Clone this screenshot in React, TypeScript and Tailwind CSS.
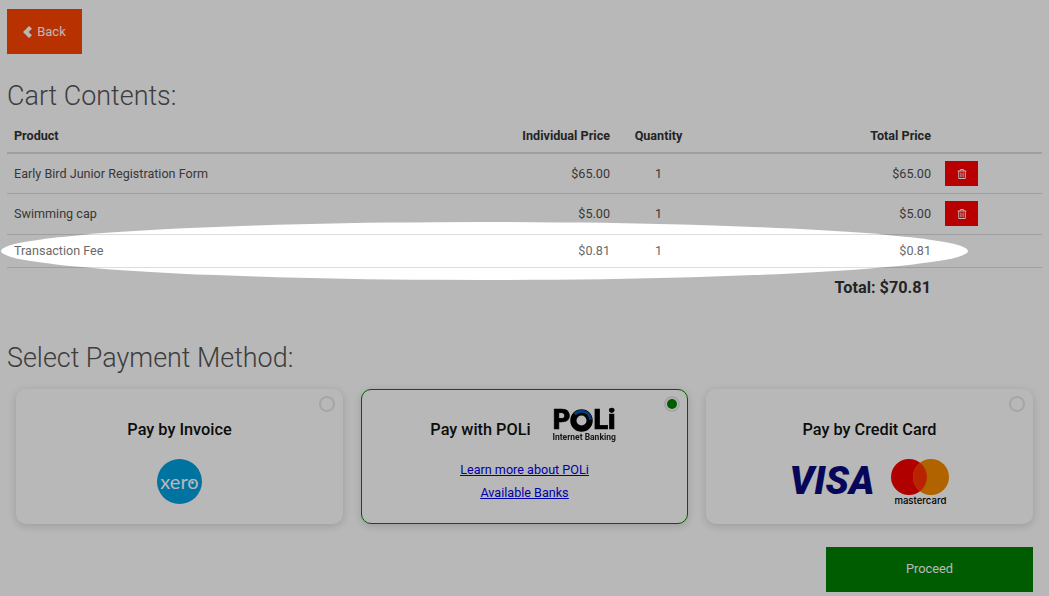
import { FaRegTrashAlt } from "react-icons/fa";

const rows = [
  { name: "Early Bird Junior Registration Form", price: "$65.00", qty: 1, total: "$65.00", removable: true },
  { name: "Swimming cap", price: "$5.00", qty: 1, total: "$5.00", removable: true },
  { name: "Transaction Fee", price: "$0.81", qty: 1, total: "$0.81", removable: false },
];

function Radio({ checked }: { checked?: boolean }) {
  return (
    <span
      className={`absolute flex h-[16px] w-[16px] items-center justify-center rounded-full border-2 border-[#e6e6e6] bg-white ${
        checked ? "right-[7px] top-[6px]" : "right-[8px] top-[7px]"
      }`}
    >
      {checked ? <span className="h-[10px] w-[10px] rounded-full bg-[#008000]" /> : null}
    </span>
  );
}

function XeroLogo() {
  return (
    <div className="flex h-[45px] w-[45px] items-center justify-center rounded-full bg-[#00a0e0] pb-[2px] font-['Lato',sans-serif] text-[20px] text-white">
      <span>
        xer
        <span className="relative">
          o
          <span className="absolute left-[4px] top-[12px] h-[3px] w-[3px] rounded-full bg-white" />
        </span>
      </span>
    </div>
  );
}

function PoliLogo() {
  return (
    <div className="flex h-[32px] w-[65px] flex-col items-center blur-[0.3px]">
      <div className="flex h-[23px] items-center text-[27px] font-black leading-[23px] text-black [-webkit-text-stroke:0.7px_#000]">
        <span>P</span>
        <svg viewBox="0 0 24 24" className="h-[23px] w-[23px]">
          <circle cx="12" cy="12" r="8.5" fill="none" stroke="#000" strokeWidth="6.5" />
          <path d="M5 5.5 A 9.5 9.5 0 0 1 21.5 11" fill="none" stroke="#0a56a8" strokeWidth="3" />
        </svg>
        <span>Li</span>
      </div>
      <div className="mt-[1px] whitespace-nowrap text-[8.5px] font-bold leading-[9px] text-[#222]">Internet Banking</div>
    </div>
  );
}

function CardLogos() {
  return (
    <div className="mt-[19px] flex items-start justify-center gap-[17px]">
      <div className="mt-[3px] text-[38.5px] font-black italic leading-[38px] text-[#0a0a7d]">VISA</div>
      <div className="flex flex-col items-center">
        <svg viewBox="0 0 58 36" className="h-[36px] w-[58px]">
          <circle cx="18" cy="18" r="18" fill="#f50000" />
          <circle cx="40" cy="18" r="18" fill="#f58a00" />
          <path d="M29 3.8 A18 18 0 0 1 29 32.2 A18 18 0 0 1 29 3.8 Z" fill="#ff3300" />
        </svg>
        <div className="pt-[1px] font-['Inter',sans-serif] text-[9.6px] font-medium leading-[10px] text-black">mastercard</div>
      </div>
    </div>
  );
}

export default function App() {
  return (
    <div className="relative h-screen overflow-hidden bg-white px-[7px] pt-[9px] font-['Roboto',sans-serif] text-[12.6px] text-[#4f4f4f]">
      <button
        type="button"
        className="flex h-[45px] w-[75px] items-center justify-center gap-[5px] bg-[#ff4500] text-[13px] text-white"
      >
        <svg viewBox="0 0 9 12" className="h-[12px] w-[9px]" fill="currentColor">
          <path d="M6 0 L9 2.8 L5.6 6 L9 9.2 L6 12 L0 6 Z" />
        </svg>
        Back
      </button>

      <h2 className="mt-[24px] text-[26.9px] font-light leading-[36px] text-[#555]">Cart Contents:</h2>

      <table className="mt-[5px] w-[1035px] table-fixed border-collapse">
        <colgroup>
          <col className="w-[443px]" />
          <col className="w-[167px]" />
          <col className="w-[83px]" />
          <col className="w-[238px]" />
          <col className="w-[104px]" />
        </colgroup>
        <thead>
          <tr className="h-[34px] border-b-2 border-[#ddd] font-bold text-[#333]">
            <th className="px-[7px] pt-[2px] text-left">Product</th>
            <th className="px-[7px] pt-[2px] text-right">Individual Price</th>
            <th className="px-[7px] pt-[2px] text-center">Quantity</th>
            <th className="px-[7px] pt-[2px] text-right">Total Price</th>
            <th />
          </tr>
        </thead>
        <tbody>
          {rows.map((row) => (
            <tr
              key={row.name}
              className={`border-b border-[#ddd] ${row.removable ? "h-[40.5px]" : "h-[33px] text-[#6a6a6a]"}`}
            >
              <td className="px-[7px] pt-[2px]">{row.name}</td>
              <td className="px-[7px] pt-[2px] text-right">{row.price}</td>
              <td className="px-[7px] pt-[2px] text-center">{row.qty}</td>
              <td className="px-[7px] pt-[2px] text-right">{row.total}</td>
              <td className="px-[7px]">
                {row.removable ? (
                  <button type="button" className="flex h-[25px] w-[33px] items-center justify-center bg-[#ff0000] text-white">
                    <FaRegTrashAlt className="text-[10px]" />
                  </button>
                ) : null}
              </td>
            </tr>
          ))}
          <tr className="h-[41px]">
            <td colSpan={4} className="px-[7px] text-right text-[16.3px] font-bold text-[#333]">
              Total: $70.81
            </td>
            <td />
          </tr>
        </tbody>
      </table>

      <h2 className="mt-[32px] text-[26.9px] font-light leading-[36px] text-[#555]">Select Payment Method:</h2>

      <div className="mt-[13px] grid grid-cols-3 gap-[18px] px-[9px]">
        <div className="relative h-[135px] rounded-[10px] bg-white pt-[31px] text-center shadow-[0_2px_8px_rgba(0,0,0,0.16)]">
          <Radio />
          <div className="text-[16.3px] font-medium leading-[20px] text-[#111]">Pay by Invoice</div>
          <div className="mt-[19px] flex justify-center">
            <XeroLogo />
          </div>
        </div>

        <div className="relative h-[135px] rounded-[10px] border border-[#008000] bg-white pt-[19px] text-center shadow-[0_2px_8px_rgba(0,0,0,0.16)]">
          <Radio checked />
          <div className="flex items-start justify-center gap-[21px] pr-[2px]">
            <div className="mt-[11px] text-[16.3px] font-medium leading-[20px] text-[#111]">Pay with POLi</div>
            <PoliLogo />
          </div>
          <div className="mt-[21px] flex flex-col gap-[8px] leading-[15px] text-[#0000ee] underline">
            <a href="#poli">Learn more about POLi</a>
            <a href="#banks">Available Banks</a>
          </div>
        </div>

        <div className="relative h-[135px] rounded-[10px] bg-white pt-[31px] text-center shadow-[0_2px_8px_rgba(0,0,0,0.16)]">
          <Radio />
          <div className="text-[16.3px] font-medium leading-[20px] text-[#111]">Pay by Credit Card</div>
          <CardLogos />
        </div>
      </div>

      <div className="mt-[23px] flex justify-end pr-[9px]">
        <button type="button" className="h-[45px] w-[207px] bg-[#008000] pb-[2px] text-[12.8px] text-white">
          Proceed
        </button>
      </div>

      {/* spotlight over the fee row, everything outside it is dimmed */}
      <div className="pointer-events-none absolute left-[1px] top-[222px] h-[58px] w-[967px] rounded-[50%] shadow-[0_0_0_2000px_rgba(0,0,0,0.28)]" />
    </div>
  );
}
